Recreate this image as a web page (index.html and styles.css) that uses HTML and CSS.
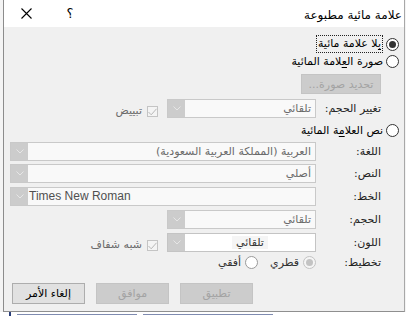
FILE: index.html
```html
<!DOCTYPE html>
<html lang="ar">
<head>
<meta charset="utf-8">
<link rel="stylesheet" href="styles.css">
</head>
<body>
<div class="dialog">
  <div class="titlebar">
    <span class="title">علامة مائية مطبوعة</span>
    <div class="caption-btns">
      <span class="cbtn help">؟</span>
      <span class="cbtn close"><svg width="11" height="11" viewBox="0 0 11 11"><path d="M0.5 0.5 L10.5 10.5 M10.5 0.5 L0.5 10.5" stroke="#000" stroke-width="1.1" fill="none"/></svg></span>
    </div>
  </div>
  <div class="content">
    <div class="radio-row first">
      <span class="radio on"></span>
      <span class="focus"><u>ب</u>لا علامة مائية</span>
    </div>
    <div class="radio-row">
      <span class="radio"></span>
      <span>صورة ال<u>ع</u>لامة المائية</span>
    </div>
    <div class="pic-row">
      <span class="btn disabled pic">تحديد صورة...</span>
    </div>
    <div class="field resize">
      <span class="lbl">تغيير الحجم:</span>
      <div class="combo short"><span class="val">تلقائي</span><span class="dd"><svg width="8" height="5" viewBox="0 0 8 5"><path d="M0.5 0.5 L4 4 L7.5 0.5" stroke="#e6e6e6" fill="none"/></svg></span></div>
      <span class="check"><svg width="9" height="8" viewBox="0 0 9 8"><path d="M0.5 4 L3.2 6.8 L8.5 0.8" stroke="#b8b8b8" fill="none"/></svg></span>
      <span class="chk-lbl">تبييض</span>
    </div>
    <div class="radio-row third">
      <span class="radio"></span>
      <span>نص العلا<u>م</u>ة المائية</span>
    </div>
    <div class="field gap3">
      <span class="lbl">اللغة:</span>
      <div class="combo long"><span class="val">العربية (المملكة العربية السعودية)</span><span class="dd"><svg width="8" height="5" viewBox="0 0 8 5"><path d="M0.5 0.5 L4 4 L7.5 0.5" stroke="#e6e6e6" fill="none"/></svg></span></div>
    </div>
    <div class="field gap3">
      <span class="lbl">النص:</span>
      <div class="combo long"><span class="val">أصلي</span><span class="dd"><svg width="8" height="5" viewBox="0 0 8 5"><path d="M0.5 0.5 L4 4 L7.5 0.5" stroke="#e6e6e6" fill="none"/></svg></span></div>
    </div>
    <div class="field gap4">
      <span class="lbl">الخط:</span>
      <div class="combo long"><span class="val latin">Times New Roman</span><span class="dd"><svg width="8" height="5" viewBox="0 0 8 5"><path d="M0.5 0.5 L4 4 L7.5 0.5" stroke="#e6e6e6" fill="none"/></svg></span></div>
    </div>
    <div class="field gap4">
      <span class="lbl">الحجم:</span>
      <div class="combo short"><span class="val">تلقائي</span><span class="dd"><svg width="8" height="5" viewBox="0 0 8 5"><path d="M0.5 0.5 L4 4 L7.5 0.5" stroke="#e6e6e6" fill="none"/></svg></span></div>
    </div>
    <div class="field gap4">
      <span class="lbl">اللون:</span>
      <div class="combo short white"><span class="val center"><span class="hl">تلقائي</span></span><span class="dd"><svg width="8" height="5" viewBox="0 0 8 5"><path d="M0.5 0.5 L4 4 L7.5 0.5" stroke="#e6e6e6" fill="none"/></svg></span></div>
      <span class="check"><svg width="9" height="8" viewBox="0 0 9 8"><path d="M0.5 4 L3.2 6.8 L8.5 0.8" stroke="#b8b8b8" fill="none"/></svg></span>
      <span class="chk-lbl">شبه شفاف</span>
    </div>
    <div class="field layout">
      <span class="lbl">تخطيط:</span>
      <span class="radio dis on"></span>
      <span class="opt">قطري</span>
      <span class="radio mid"></span>
      <span class="opt">أفقي</span>
    </div>
    <div class="buttons">
      <span class="btn disabled">تطبيق</span>
      <span class="btn disabled">موافق</span>
      <span class="btn normal">إلغاء الأمر</span>
    </div>
  </div>
</div>
<div class="doc-strip"><span class="ln a"></span><span class="ln b"></span><span class="ln c"></span></div>
</body>
</html>
```

FILE: styles.css
```css
html, body {
  margin: 0;
  padding: 0;
}
body {
  width: 406px;
  height: 316px;
  overflow: hidden;
  background: #f4f4f4;
  font-family: "DejaVu Sans", sans-serif;
  font-size: 11px;
  color: #1a1a1a;
}
.dialog {
  margin-left: 3px;
  width: 402px;
  height: 312px;
  box-sizing: border-box;
  border-left: 1px solid #8c8c8c;
  border-right: 1px solid #a8a8a8;
  border-bottom: 1px solid #8f8f8f;
  background: #f0f0f0;
  direction: rtl;
}
.titlebar {
  height: 27px;
  background: #ffffff;
  display: flex;
  align-items: center;
  justify-content: space-between;
  padding-right: 2px;
}
.title {
  font-size: 12px;
  color: #000;
  padding-top: 2px;
}
.caption-btns {
  display: flex;
  height: 27px;
}
.cbtn {
  width: 44px;
  display: flex;
  align-items: center;
  justify-content: center;
}
.help {
  font-size: 13px;
  color: #000;
}
.close svg { display: block; }
.content {
  display: flex;
  flex-direction: column;
}
.radio-row {
  display: flex;
  align-items: center;
  height: 16px;
  padding-right: 5px;
  gap: 3px;
  color: #000;
}
.radio-row.first {
  margin-top: 8px;
  height: 18px;
}
.radio-row.third {
  margin-top: 3px;
  height: 18px;
}
.focus {
  border: 1px dotted #222;
  padding: 0 1px;
  height: 16px;
  line-height: 16px;
}
u {
  text-decoration-thickness: 1px;
  text-underline-offset: 2px;
}
.radio {
  width: 13px;
  height: 13px;
  box-sizing: border-box;
  border: 1px solid #333;
  border-radius: 50%;
  background: #fff;
  flex: none;
  display: flex;
  align-items: center;
  justify-content: center;
}
.radio.on::after {
  content: "";
  width: 7px;
  height: 7px;
  border-radius: 50%;
  background: #333;
}
.radio.dis {
  border-color: #c3c3c3;
  background: #f5f5f5;
}
.radio.dis.on::after {
  background: #c3c3c3;
}
.radio.mid {
  border-color: #9a9a9a;
}
.pic-row {
  margin-top: 5px;
  display: flex;
  padding-right: 23px;
}
.btn {
  height: 21px;
  width: 73px;
  box-sizing: border-box;
  display: flex;
  align-items: center;
  justify-content: center;
  font-size: 11px;
}
.btn.disabled {
  background: #cccccc;
  border: 1px solid #c4c4c4;
  color: #a3a3a3;
}
.btn.normal {
  background: #e1e1e1;
  border: 1px solid #adadad;
  color: #000;
}
.btn.pic {
  width: 80px;
  height: 20px;
}
.field {
  display: flex;
  align-items: center;
  height: 19px;
  padding-right: 23px;
}
.field.resize { margin-top: 5px; }
.field.gap3 { margin-top: 3px; }
.field.gap4 { margin-top: 4px; }
.lbl {
  width: 65px;
  flex: none;
  color: #222;
}
.combo {
  height: 19px;
  box-sizing: border-box;
  border: 1px solid #c9c9c9;
  background: #f9f9f9;
  display: flex;
  flex: none;
}
.combo.short { width: 149px; }
.combo.long { width: 306px; }
.combo.white { background: #ffffff; border-color: #c4c4c4; }
.val {
  flex: 1;
  padding: 0 4px;
  line-height: 17px;
  color: #6a6a6a;
  text-align: right;
  white-space: nowrap;
  overflow: hidden;
}
.val.latin {
  direction: ltr;
  text-align: left;
  padding-left: 1px;
  font-family: "Liberation Sans", Arial, sans-serif;
  font-size: 12px;
  color: #505050;
}
.val.center {
  text-align: center;
  color: #333;
}
.hl {
  background: #f5f5f5;
  padding: 0 4px;
}
.dd {
  width: 17px;
  flex: none;
  background: #cccccc;
  display: flex;
  align-items: center;
  justify-content: center;
}
.dd svg { display: block; }
.check {
  width: 11px;
  height: 11px;
  box-sizing: border-box;
  border: 1px solid #c4c4c4;
  background: #f4f4f4;
  margin-right: 9px;
  margin-top: 6px;
  display: flex;
  align-items: center;
  justify-content: center;
  flex: none;
}
.check svg { display: block; }
.chk-lbl {
  margin-right: 5px;
  color: #6a6a6a;
  margin-top: 4px;
}
.field.layout {
  margin-top: 2px;
  height: 16px;
}
.opt {
  margin-right: 4px;
  color: #333;
}
.layout .radio.mid {
  margin-right: 12px;
}
.buttons {
  margin-top: 13px;
  display: flex;
  justify-content: flex-end;
  gap: 11px;
  padding-left: 8px;
}
.doc-strip {
  height: 4px;
  background: #ffffff;
  display: flex;
  align-items: center;
  gap: 6px;
  padding-left: 9px;
}
.ln {
  height: 1px;
  background: #7f8bb0;
}
.ln.a { width: 2px; height: 4px; background: #2b3f7a; }
.ln.b { width: 120px; }
.ln.c { width: 130px; }
```
